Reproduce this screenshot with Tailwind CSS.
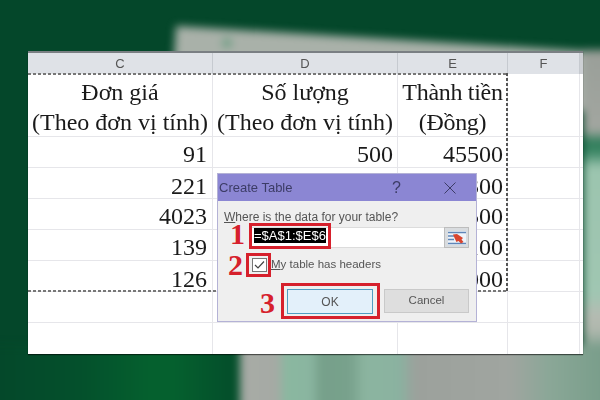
<!DOCTYPE html>
<html lang="en">
<head>
  <meta charset="UTF-8" />
  <title>Create Table</title>
  <script src="https://cdn.jsdelivr.net/npm/@tailwindcss/browser@4"></script>
</head>
<body class="w-[600px] h-[400px] overflow-hidden bg-[#04472a]">
  <div class="relative w-[600px] h-[400px] overflow-hidden">

    <!-- blurred backdrop -->
    <div class="absolute inset-0 blur-[4px]">
      <div class="absolute left-[176px] top-[26px] w-[460px] h-[60px] bg-[#a9b1a9] rotate-[3.5deg] origin-top-left"></div>
      <div class="absolute left-[222px] top-[38px] w-[10px] h-[10px] rounded-full bg-[#6f9e84]"></div>
      <div class="absolute left-[583px] top-[50px] w-[30px] h-[320px] bg-[linear-gradient(180deg,#9a9f99_0,#a2a6a0_80px,#2f7d5a_92px,#3b8665_102px,#9cc5af_118px,#a0c6b2_245px,#b5bbb2_265px,#b0b8ae_280px,#7a9e8b_300px)]"></div>
      <div class="absolute left-[240px] top-[345px] w-[370px] h-[70px] bg-[linear-gradient(90deg,#a8aba6_0,#a5aaa4_38px,#8ab8a0_45px,#8ab5a0_72px,#76a08a_80px,#78a18c_110px,#8cb5a0_125px,#8ab2a0_160px,#9ca19c_175px,#a0a5a0_270px,#8aa797_310px,#7a9e8b_360px)]"></div>
      <div class="absolute left-[-10px] top-[345px] w-[250px] h-[70px] bg-[linear-gradient(90deg,#04472a_0,#04502c_90px,#05602e_160px,#05602e_185px,#044f2b_240px)]"></div>
    </div>

    <!-- sheet -->
    <div class="absolute left-[28px] top-[51px] w-[555px] h-[303px] bg-white shadow-[0_1px_1px_rgba(0,0,0,0.55)] font-['Liberation_Serif',serif] text-[#1a1a1a] text-[24px] blur-[0.3px]">
      <div class="grid grid-cols-[185px_185px_110px_72px_3px] h-[23px] bg-[#dfe2e7] border-t-2 border-[#7a7f83] font-['Liberation_Sans',sans-serif] text-[13px] text-[#555] text-center leading-[21px]">
        <div class="border-r border-[#c6cad0]">C</div>
        <div class="border-r border-[#c6cad0]">D</div>
        <div class="border-r border-[#c6cad0]">E</div>
        <div class="border-r border-[#c6cad0]">F</div>
        <div class="bg-[#cdd0d4]"></div>
      </div>

      <div class="grid grid-cols-[185px_185px_110px_72px_3px] h-[63px] border-b border-[#e6e6ea] text-center leading-[30px]">
        <div class="border-r border-[#e6e6ea] whitespace-nowrap pt-[3px]">Đơn giá<br>(Theo đơn vị tính)</div>
        <div class="border-r border-[#e6e6ea] whitespace-nowrap pt-[3px]">Số lượng<br>(Theo đơn vị tính)</div>
        <div class="border-r border-[#e6e6ea] whitespace-nowrap pt-[3px] tracking-[-0.3px]">Thành tiền<br>(Đồng)</div>
        <div class="border-r border-[#e6e6ea]"></div>
        <div></div>
      </div>

      <div class="grid grid-cols-[185px_185px_110px_72px_3px] h-[31px] border-b border-[#e6e6ea] text-right leading-[30px]">
        <div class="border-r border-[#e6e6ea] pr-[5px] pt-[2px]">91</div>
        <div class="border-r border-[#e6e6ea] pr-[4px] pt-[2px]">500</div>
        <div class="border-r border-[#e6e6ea] pr-[4px] pt-[2px]">45500</div>
        <div class="border-r border-[#e6e6ea]"></div>
        <div></div>
      </div>
      <div class="grid grid-cols-[185px_185px_110px_72px_3px] h-[31px] border-b border-[#e6e6ea] text-right leading-[30px]">
        <div class="border-r border-[#e6e6ea] pr-[5px] pt-[3px]">221</div>
        <div class="border-r border-[#e6e6ea]"></div>
        <div class="border-r border-[#e6e6ea] pr-[4px] pt-[3px]">66300</div>
        <div class="border-r border-[#e6e6ea]"></div>
        <div></div>
      </div>
      <div class="grid grid-cols-[185px_185px_110px_72px_3px] h-[31px] border-b border-[#e6e6ea] text-right leading-[30px]">
        <div class="border-r border-[#e6e6ea] pr-[5px] pt-[2px]">4023</div>
        <div class="border-r border-[#e6e6ea]"></div>
        <div class="border-r border-[#e6e6ea] pr-[4px] pt-[2px]">60500</div>
        <div class="border-r border-[#e6e6ea]"></div>
        <div></div>
      </div>
      <div class="grid grid-cols-[185px_185px_110px_72px_3px] h-[31px] border-b border-[#e6e6ea] text-right leading-[30px]">
        <div class="border-r border-[#e6e6ea] pr-[5px] pt-[2px]">139</div>
        <div class="border-r border-[#e6e6ea]"></div>
        <div class="border-r border-[#e6e6ea] pr-[4px] pt-[2px]">10100</div>
        <div class="border-r border-[#e6e6ea]"></div>
        <div></div>
      </div>
      <div class="grid grid-cols-[185px_185px_110px_72px_3px] h-[31px] border-b border-[#e6e6ea] text-right leading-[30px]">
        <div class="border-r border-[#e6e6ea] pr-[5px] pt-[3px]">126</div>
        <div class="border-r border-[#e6e6ea]"></div>
        <div class="border-r border-[#e6e6ea] pr-[4px] pt-[3px]">54000</div>
        <div class="border-r border-[#e6e6ea]"></div>
        <div></div>
      </div>
      <div class="grid grid-cols-[185px_185px_110px_72px_3px] h-[31px] border-b border-[#e6e6ea]">
        <div class="border-r border-[#e6e6ea]"></div>
        <div class="border-r border-[#e6e6ea]"></div>
        <div class="border-r border-[#e6e6ea]"></div>
        <div class="border-r border-[#e6e6ea]"></div>
        <div></div>
      </div>
      <div class="grid grid-cols-[185px_185px_110px_72px_3px] h-[31px]">
        <div class="border-r border-[#e6e6ea]"></div>
        <div class="border-r border-[#e6e6ea]"></div>
        <div class="border-r border-[#e6e6ea]"></div>
        <div class="border-r border-[#e6e6ea]"></div>
        <div></div>
      </div>

      <!-- marching ants round the copied range -->
      <div class="absolute left-0 top-[22px] w-[480px] h-[2px] bg-[repeating-linear-gradient(90deg,#777_0_3px,transparent_3px_5px)]"></div>
      <div class="absolute left-0 top-[239px] w-[480px] h-[2px] bg-[repeating-linear-gradient(90deg,#777_0_3px,transparent_3px_5px)]"></div>
      <div class="absolute left-[478px] top-[22px] w-[2px] h-[219px] bg-[repeating-linear-gradient(180deg,#555_0_3px,transparent_3px_5px)]"></div>
    </div>

    <!-- dialog -->
    <div class="absolute left-[217px] top-[173px] w-[260px] h-[149px] bg-[#efefef] border border-[#b4b2d6] font-['Liberation_Sans',sans-serif] text-[#555] blur-[0.3px]">
      <div class="flex items-center h-[27px] bg-[#8b86d3] pl-[1px] pr-[20px] text-[13px] text-[#3c3c66]">
        <span>Create Table</span>
        <span class="ml-auto text-[16px]">?</span>
        <svg class="ml-[43px] w-[12px] h-[12px]" viewBox="0 0 12 12"><path d="M0.5 0.5L11.5 11.5M11.5 0.5L0.5 11.5" stroke="#3c3c66" stroke-width="1" fill="none"/></svg>
      </div>

      <div class="pl-[6px] pt-[9px] text-[12px] leading-[15px]"><span class="underline">W</span>here is the data for your table?</div>

      <div class="relative mt-[2px] ml-[33px] mr-[7px] h-[21px] flex items-start bg-white border border-[#dcdcdc]">
        <span class="ml-[2px] bg-black text-white text-[13px] leading-[15px]">=$A$1:$E$6</span>
        <div class="absolute -left-[3px] -top-[5px] w-[82px] h-[26px] border-[3px] border-[#d6202c]"></div>
        <div class="absolute -right-px -top-px w-[25px] h-[21px] flex items-center justify-center bg-[#d9dcdf] border border-[#bdbdbd]">
          <svg class="w-[18px] h-[14px]" viewBox="0 0 18 14">
            <rect x="0" y="0" width="18" height="14" fill="#eef3fa"/>
            <path d="M0 1.5H18M0 5H6M0 8.5H6M0 12.5H18" stroke="#5f86b8" stroke-width="1.4"/>
            <path d="M5 3.5L9 3L15 7L13.5 8.5L15.5 11L13 12.5L10.5 10L8.5 11L7 8Z" fill="#d8452f"/>
          </svg>
        </div>
      </div>

      <div class="flex items-center mt-[5px] ml-[34px] h-[24px] text-[11.5px]">
        <div class="relative w-[15px] h-[14px] bg-white border border-[#777]">
          <svg class="absolute left-[1px] top-[1px] w-[11px] h-[10px]" viewBox="0 0 11 10"><path d="M1 5L4 8L10 1.5" stroke="#444" stroke-width="1.2" fill="none"/></svg>
          <div class="absolute -left-[7px] -top-[6px] w-[25px] h-[24px] border-[3px] border-[#d6202c]"></div>
        </div>
        <span class="ml-[4px]"><span class="underline">M</span>y table has headers</span>
      </div>

      <div class="flex mt-[12px] ml-[69px] gap-[11px] text-[12px]">
        <div class="relative w-[86px] h-[25px] flex items-center justify-center bg-[#e3f0fa] border border-[#4f9cc2]">
          OK
          <div class="absolute -left-[7px] -top-[7px] w-[99px] h-[36px] border-[3px] border-[#d6202c]"></div>
        </div>
        <div class="w-[85px] h-[24px] flex items-center justify-center bg-[#dedede] border border-[#c9c9c9] text-[11.5px]">Cancel</div>
      </div>
    </div>

    <!-- step numbers -->
    <span class="absolute left-[230px] top-[224px] font-['Liberation_Serif',serif] font-bold text-[30px] leading-[20px] text-[#d6202c]">1</span>
    <span class="absolute left-[228px] top-[255px] font-['Liberation_Serif',serif] font-bold text-[30px] leading-[20px] text-[#d6202c]">2</span>
    <span class="absolute left-[260px] top-[293px] font-['Liberation_Serif',serif] font-bold text-[30px] leading-[20px] text-[#d6202c]">3</span>
  </div>
</body>
</html>
